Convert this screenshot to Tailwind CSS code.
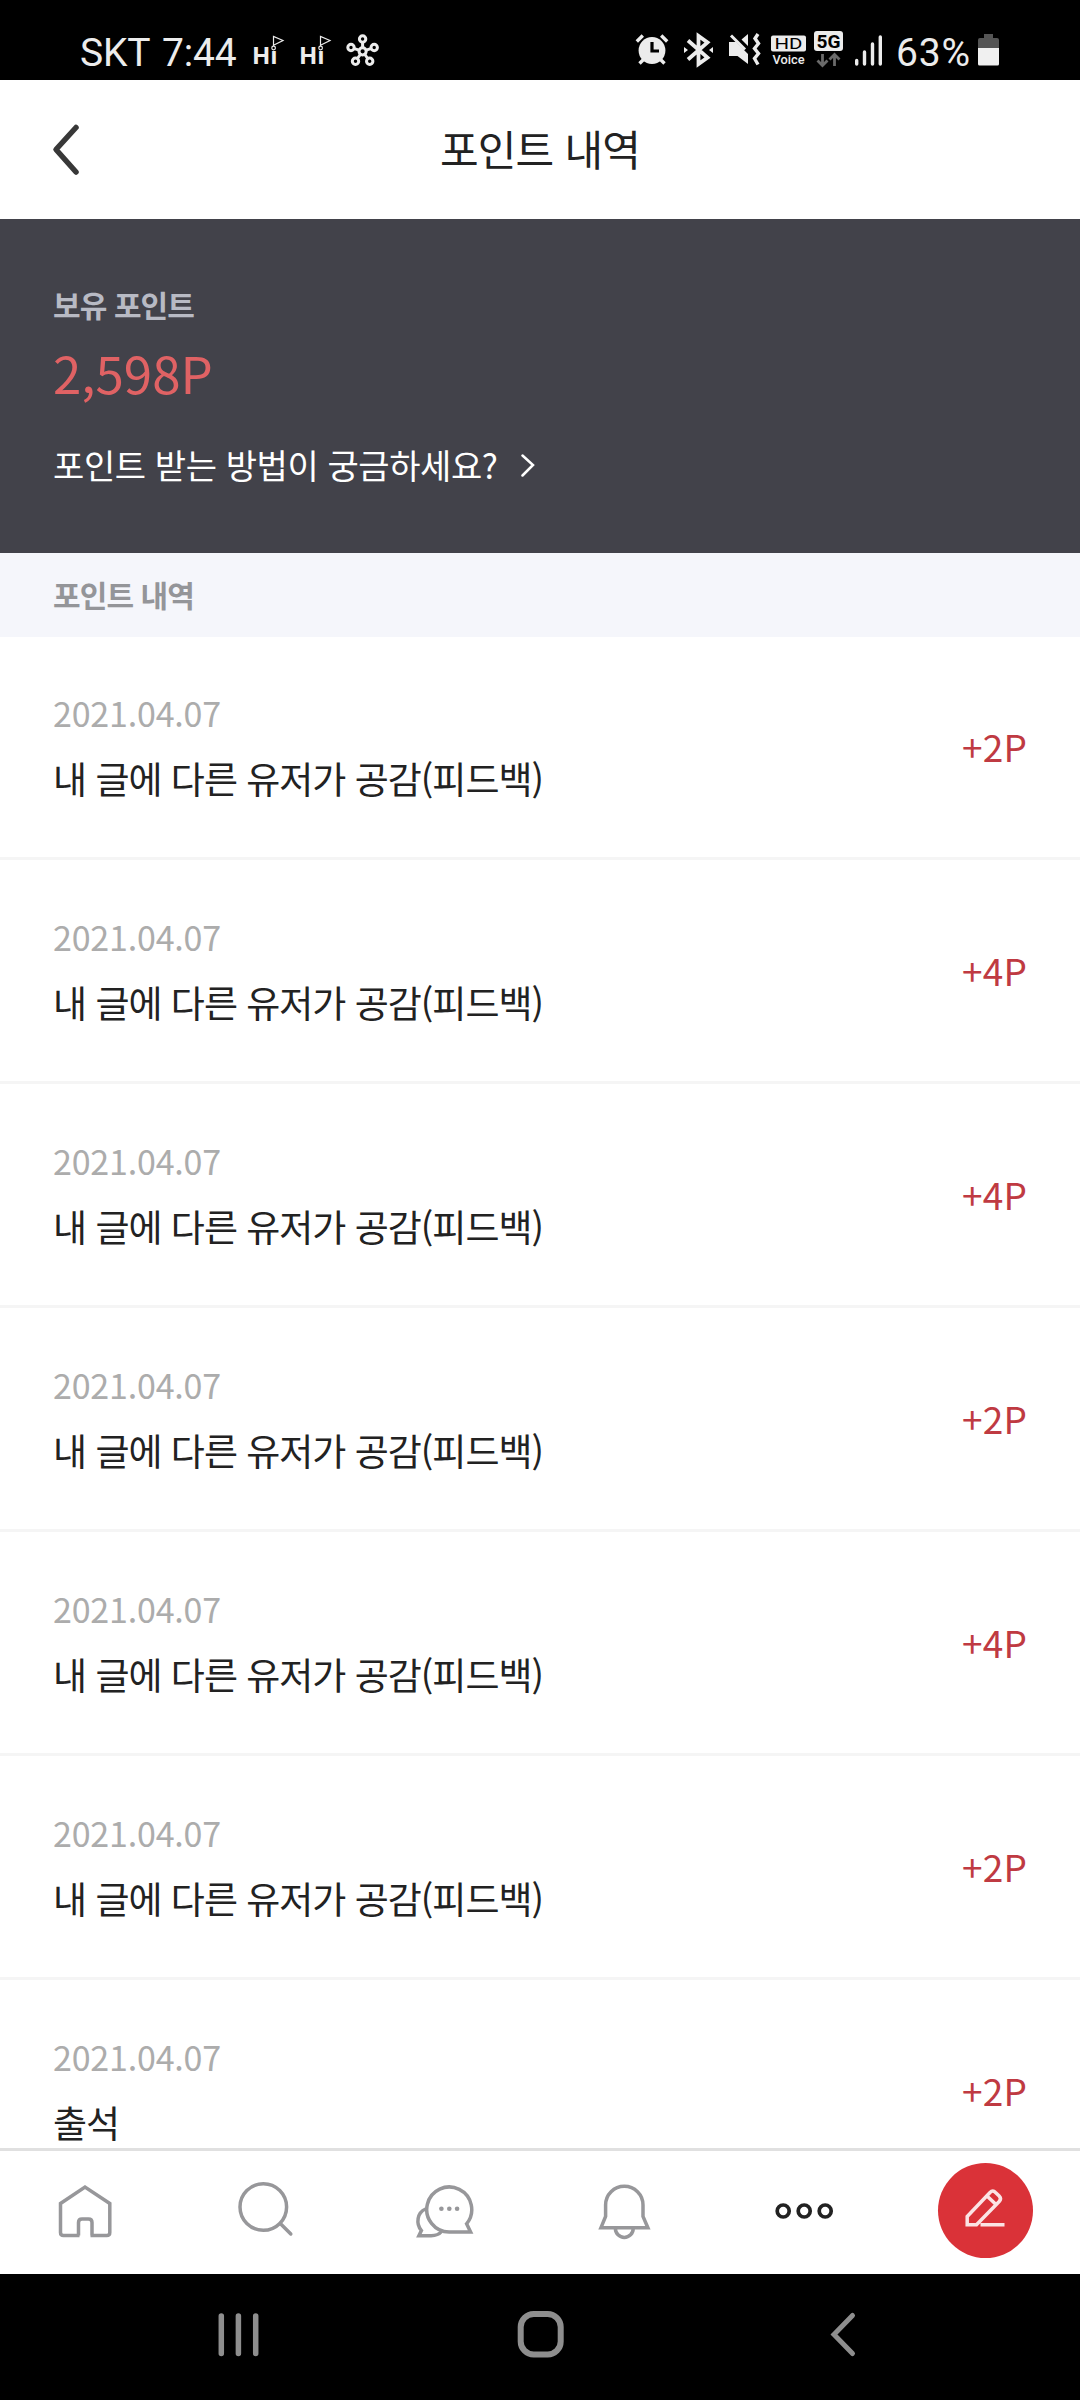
<!DOCTYPE html>
<html lang="ko">
<head>
    <meta charset="UTF-8">
    <meta name="viewport" content="width=device-width, initial-scale=1.0">
    <title>포인트 내역</title>
    <script src="https://cdn.jsdelivr.net/npm/@tailwindcss/browser@4"></script>
</head>
<body class="flex flex-col w-[1080px] h-[2400px] overflow-hidden bg-white font-['Noto_Sans_CJK_KR',sans-serif] text-[#222]">

    <!-- Status bar -->
    <div class="flex items-center justify-between h-20 shrink-0 bg-black text-[#ececec] pl-20 pr-20 font-['Roboto',sans-serif] text-[39px]">
        <div class="flex items-center h-20">
            <span class="w-[172px] whitespace-nowrap leading-[80px] pt-[25px] tracking-[-0.2px] [word-spacing:3px]">SKT 7:44</span>
            <svg class="w-[136px] h-20" viewBox="252 0 136 80" fill="none" stroke="#ececec">
                <text x="252" y="64" font-family="Open Sans" font-size="24" font-weight="700" letter-spacing="0" fill="#ececec" stroke="none">H&#305;</text>
                <circle cx="273.6" cy="48" r="1.8" stroke-width="1.2" />
                <path d="M273.5 46V36.5L283 40.5L274 45" stroke-width="1.2" />
                <text x="299" y="64" font-family="Open Sans" font-size="24" font-weight="700" fill="#ececec" stroke="none">H&#305;</text>
                <circle cx="320.6" cy="48" r="1.8" stroke-width="1.2" />
                <path d="M320.5 46V36.5L330 40.5L321 45" stroke-width="1.2" />
                <g stroke-width="3">
                    <circle cx="362.6" cy="51.3" r="3.6" />
                    <circle cx="362.6" cy="39" r="3.2" />
                    <circle cx="351" cy="47.5" r="3.2" />
                    <circle cx="374.2" cy="47.5" r="3.2" />
                    <circle cx="355.5" cy="61.3" r="3.2" />
                    <circle cx="369.7" cy="61.3" r="3.2" />
                    <path d="M362.6 42.5v5M354.3 48.6l4.8 1.6M370.9 48.6l-4.8 1.6M357.5 58.5l2.8-4M367.7 58.5l-2.8-4" />
                </g>
            </svg>
        </div>
        <div class="flex items-center h-20">
            <svg class="w-[262px] h-20" viewBox="634 0 262 80" fill="none" stroke="#ececec">
                <!-- alarm -->
                <circle cx="652" cy="50.5" r="13.4" fill="#ececec" stroke="none" />
                <path d="M636.8 41.5l6-6M661.2 35.5l6 6M639.5 63.5l4-4M664.5 63.5l-4-4" stroke-width="3.4" />
                <path d="M652 42v9h7" stroke="#000" stroke-width="3.2" />
                <!-- bluetooth -->
                <path d="M688 40.5l19.5 17L698.5 64V36l9 6.5L688 59.5" stroke-width="3.8" />
                <path d="M684 47l4 3l-4 3zM713 47l-4 3l4 3z" fill="#ececec" stroke="none" />
                <!-- mute and vibrate -->
                <path d="M729 42h7l12 12v10l-10.5-8H729zM748 34v12l-6.5-6.5z" fill="#ececec" stroke="none" />
                <path d="M731 35.5l14 14" stroke-width="3" />
                <path d="M758 34l-3 4.5l3.5 5l-4 5l4 5l-4 5l3.5 6" stroke-width="3.4" />
                <!-- HD voice -->
                <rect x="771" y="35.5" width="35" height="16" rx="2" fill="#ececec" stroke="none" />
                <text x="774.5" y="49" textLength="28" lengthAdjust="spacingAndGlyphs" font-size="15.5" fill="#000" stroke="none">HD</text>
                <text x="772.5" y="63.5" textLength="32" lengthAdjust="spacingAndGlyphs" font-size="12.5" font-weight="500" fill="#ececec" stroke="none">Voice</text>
                <!-- 5G -->
                <rect x="814" y="31" width="29" height="20" rx="3" fill="#ececec" stroke="none" />
                <text x="816.5" y="47.5" textLength="24" lengthAdjust="spacingAndGlyphs" font-size="18.5" font-weight="700" fill="#000" stroke="none">5G</text>
                <path d="M822.5 54v11M817.5 60.5l5 5l5-5M834.5 66V55M829.5 59.5l5-5l5 5" stroke="#6a6a6a" stroke-width="2.8" />
                <!-- signal -->
                <path d="M856.7 60.5v3.5M864.5 52v12M872.5 44v20M880.3 37v27" stroke-width="3.4" stroke-linecap="round" />
            </svg>
            <span class="w-[82px] whitespace-nowrap leading-[80px] pt-[25px] tracking-[0.8px]">63%</span>
            <svg class="w-[22px] h-20" viewBox="978 0 22 80">
                <path d="M984 34h9v4h-9z" fill="#555" />
                <path d="M978 40q0-2 2-2h17q2 0 2 2v8h-21z" fill="#555" />
                <path d="M978 48h21v16q0 1.5-1.5 1.5h-18q-1.5 0-1.5-1.5z" fill="#f0f0f0" />
            </svg>
        </div>
    </div>

    <!-- Header -->
    <header class="grid grid-cols-[1fr_auto_1fr] items-center h-[139px] shrink-0 bg-white px-[50px]">
        <svg class="w-8 h-14" viewBox="50.5 122 32 56" fill="none" stroke="#383838" stroke-width="5.5" stroke-linecap="round" stroke-linejoin="round">
            <path d="M76.5 127.5L56.5 149.5L76.5 172" />
        </svg>
        <h1 class="pb-[3px] text-[42px] leading-[60px] tracking-[-0.8px]">포인트 내역</h1>
        <span></span>
    </header>

    <!-- Balance -->
    <section class="h-[334px] shrink-0 bg-[#42424a] px-[53px] pt-[65px]">
        <p class="text-[30px] leading-[40px] tracking-[-0.9px] font-bold text-[#b8bac4]">보유 포인트</p>
        <p class="mt-[18px] text-[51px] leading-[60px] text-[#e06264]">2,598P</p>
        <a class="mt-[39px] flex items-center gap-[22px] text-[34px] leading-[48px] tracking-[-0.4px] text-white">
            <span>포인트 받는 방법이 궁금하세요?</span>
            <svg class="w-4 h-6" viewBox="520 453 16 24" fill="none" stroke="#fff" stroke-width="2.5" stroke-linecap="round">
                <path d="M522.5 455.5L533 465L522.5 475.5" />
            </svg>
        </a>
    </section>

    <h2 class="flex items-center h-[84px] shrink-0 bg-[#f5f6fb] px-[53px] pb-0.5 text-[30px] tracking-[-0.9px] font-bold text-[#949599]">포인트 내역</h2>

    <!-- History -->
    <ul id="history" class="flex-1 min-h-0 overflow-hidden bg-white"></ul>

    <!-- Tab bar -->
    <nav class="flex items-center justify-between h-[126px] shrink-0 border-t-3 border-[#e0e0e0] bg-white pl-[37px] pr-[47px] pb-1">
        <div class="flex justify-center w-[95px]">
            <svg class="w-[60px] h-[60px]" viewBox="54.5 2180.5 60 60" fill="none" stroke="#97979a" stroke-width="3.5">
                <path d="M79 2235H63q-3 0-3-3V2203L84.5 2186.5L109.3 2203V2232q0 3-3 3H90M78 2235V2222q0-3.5 3.5-3.5h6.5q3.5 0 3.5 3.5V2235" />
            </svg>
        </div>
        <div class="flex justify-center w-[95px]">
            <svg class="w-[60px] h-[60px]" viewBox="234.7 2180.5 60 60" fill="none" stroke="#97979a" stroke-width="3.5">
                <circle cx="263" cy="2206.5" r="23.3" />
                <path d="M280 2223l10.5 10.5" stroke-linecap="round" />
            </svg>
        </div>
        <div class="flex justify-center w-[95px]">
            <svg class="w-[60px] h-[60px]" viewBox="414.9 2180.5 60 60" fill="none" stroke="#97979a" stroke-width="3.5">
                <path d="M449 2231.5H470.5L466.5 2223.3A22.5 22.5 0 1 0 449 2231.5z" />
                <path d="M425.5 2208.5C417 2212 415.5 2223 421.3 2230L418.8 2235.2H431Q438 2235.2 441.5 2231" />
                <g fill="#97979a" stroke="none">
                    <circle cx="441.3" cy="2208.3" r="2.3" />
                    <circle cx="449.2" cy="2208.3" r="2.3" />
                    <circle cx="457" cy="2208.3" r="2.3" />
                </g>
            </svg>
        </div>
        <div class="flex justify-center w-[95px]">
            <svg class="w-[60px] h-[60px]" viewBox="595.1 2180.5 60 60" fill="none" stroke="#97979a" stroke-width="3.5">
                <path d="M601 2227.3L605.7 2216V2204.5a18.7 18.7 0 0 1 37.4 0V2216L648 2227.3z" />
                <path d="M615.5 2228a8.900 8.900 0 0 0 17.8 0" />
            </svg>
        </div>
        <div class="flex justify-center w-[95px]">
            <svg class="w-[60px] h-[60px]" viewBox="775.3 2180.5 60 60" fill="none" stroke="#222" stroke-width="3.7">
                <circle cx="783.5" cy="2210.5" r="6" />
                <circle cx="804.5" cy="2210.5" r="6" />
                <circle cx="825.5" cy="2210.5" r="6" />
            </svg>
        </div>
        <button class="flex items-center justify-center w-[95px] h-[95px] rounded-full bg-[#da3238]">
            <svg class="w-11 h-11" viewBox="963.5 2188.5 44 44" fill="none" stroke="#fbe3e4" stroke-width="3.5">
                <path d="M967.7 2224.2V2216L990.5 2192Q993.3 2189.2 996 2192L999.7 2195.5Q1002.3 2198.2 999.7 2201L977 2224.2zM987.5 2195.5l9 8.5M981 2224.2h24" />
            </svg>
        </button>
    </nav>

    <!-- System navigation -->
    <div class="flex items-center justify-between h-[126px] shrink-0 bg-black px-[213px] pb-1">
        <svg class="w-[50px] h-[50px]" viewBox="213 2310 50 50" stroke="#8e8e8e" stroke-width="5.5" stroke-linecap="round">
            <path d="M221.3 2316v37.5M238.4 2316v37.5M255.7 2316v37.5" />
        </svg>
        <svg class="w-[50px] h-[50px]" viewBox="515 2310 50 50" fill="none" stroke="#8e8e8e" stroke-width="6">
            <rect x="520.7" y="2314" width="40" height="40.5" rx="13" />
        </svg>
        <svg class="w-[50px] h-[50px]" viewBox="817 2310 50 50" fill="none" stroke="#8e8e8e" stroke-width="5" stroke-linecap="round">
            <path d="M852.5 2315.5L834 2334.5L852.5 2353.5" />
        </svg>
    </div>

    <script>
        const feedback = "내 글에 다른 유저가 공감(피드백)";
        const history = [
            ["2021.04.07", feedback, "+2P"],
            ["2021.04.07", feedback, "+4P"],
            ["2021.04.07", feedback, "+4P"],
            ["2021.04.07", feedback, "+2P"],
            ["2021.04.07", feedback, "+4P"],
            ["2021.04.07", feedback, "+2P"],
            ["2021.04.07", "출석", "+2P"],
        ];

        document.getElementById("history").innerHTML = history.map(([date, title, point]) => `
            <li class="flex items-center justify-between h-[224px] first:h-[223px] border-b-3 border-[#f5f5f5] px-[53px]">
                <div>
                    <p class="pt-0.5 text-[34px] leading-[40px] tracking-[-0.2px] text-[#acacac]">${date}</p>
                    <p class="mt-5 text-[37px] leading-[50px] tracking-[-1px]">${title}</p>
                </div>
                <span class="pb-0.5 text-[37px] leading-[50px] tracking-[0.2px] text-[#bf3a42]">${point}</span>
            </li>`).join("");
    </script>
</body>
</html>
